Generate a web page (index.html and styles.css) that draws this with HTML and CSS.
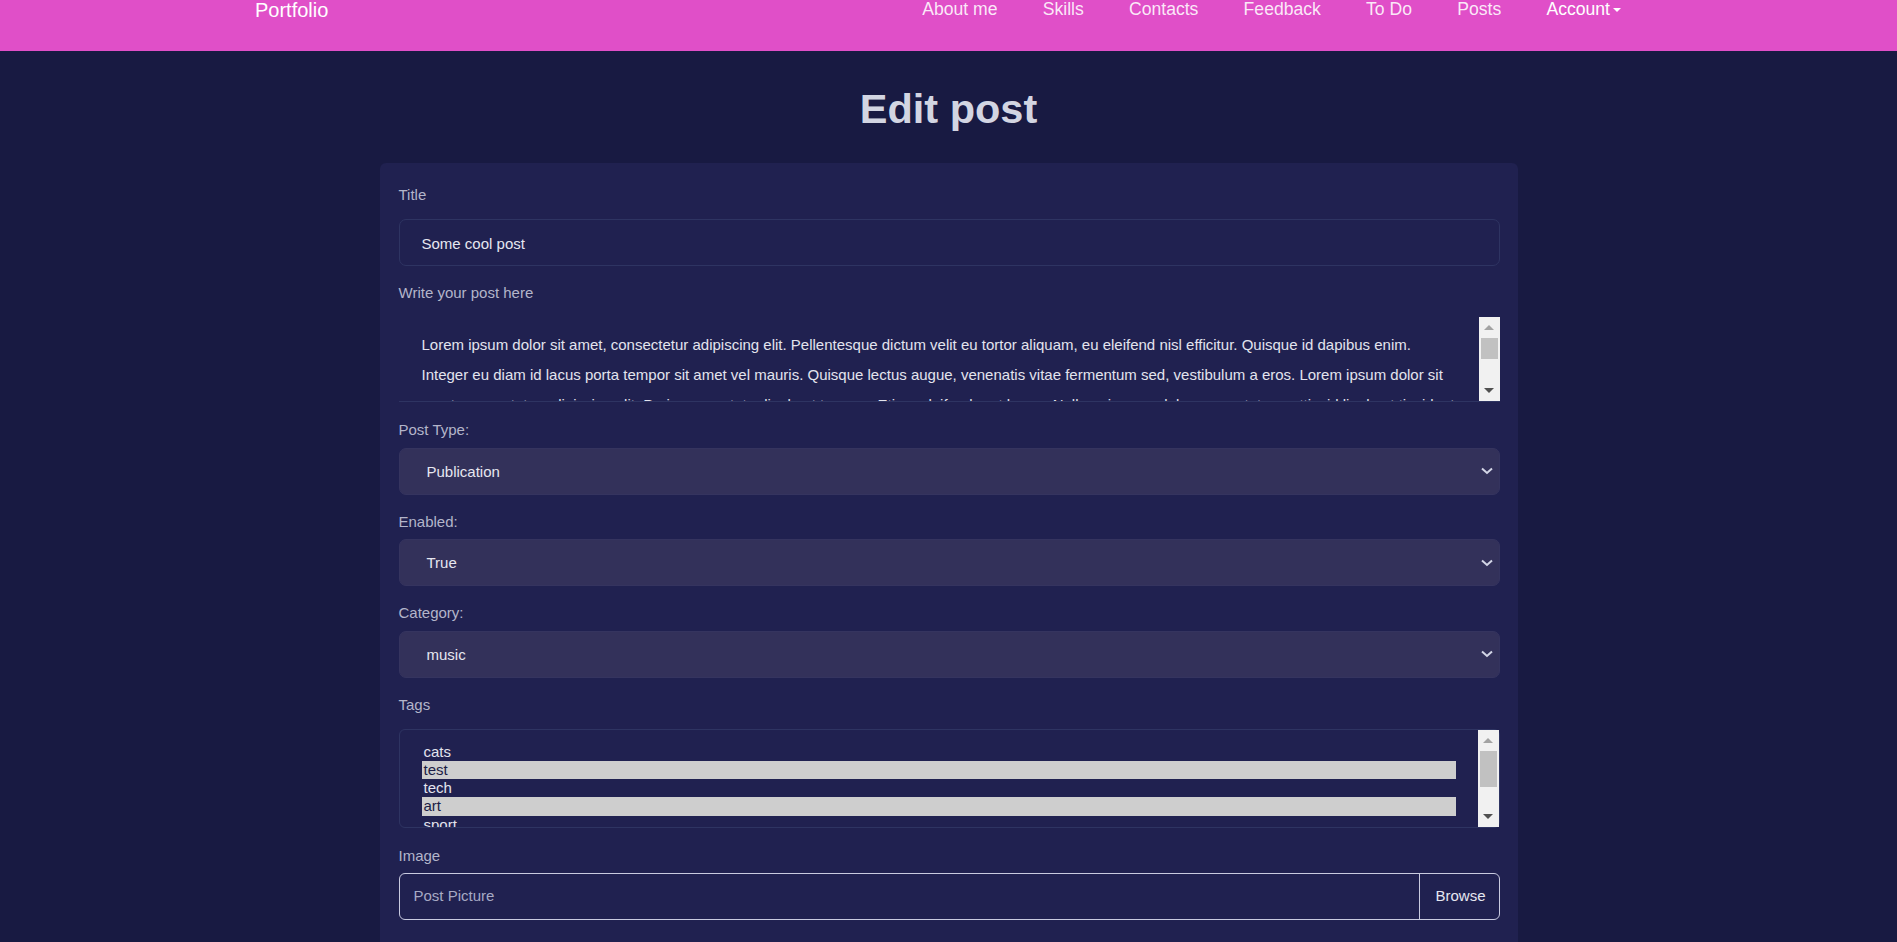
FILE: index.html
```html
<!DOCTYPE html>
<html lang="en">
<head>
<meta charset="utf-8">
<title>Edit post</title>
<link rel="stylesheet" href="styles.css">
</head>
<body>
<nav class="navbar">
  <div class="nav-inner">
    <a class="brand" href="#">Portfolio</a>
    <ul class="nav-links">
      <li><a href="#">About me</a></li>
      <li><a href="#">Skills</a></li>
      <li><a href="#">Contacts</a></li>
      <li><a href="#">Feedback</a></li>
      <li><a href="#">To Do</a></li>
      <li><a href="#">Posts</a></li>
      <li><a class="account" href="#">Account<span class="caret"></span></a></li>
    </ul>
  </div>
</nav>

<main class="page">
  <h1 class="page-title">Edit post</h1>
  <form class="card">
    <div class="field">
      <label class="form-label">Title</label>
      <div class="text-input">Some cool post</div>
    </div>

    <div class="field tall">
      <label class="form-label">Write your post here</label>
      <div class="textarea">
        <div class="textarea-body">
          <p class="line">Lorem ipsum dolor sit amet, consectetur adipiscing elit. Pellentesque dictum velit eu tortor aliquam, eu eleifend nisl efficitur. Quisque id dapibus enim.</p>
          <p class="line">Integer eu diam id lacus porta tempor sit amet vel mauris. Quisque lectus augue, venenatis vitae fermentum sed, vestibulum a eros. Lorem ipsum dolor sit</p>
          <p class="line">amet, consectetur adipiscing elit. Proin consectetur ligula et tempus. Etiam eleifend erat lorem. Nulla quis nunc dolor consectetur mattis, id ligula et tincidunt.</p>
        </div>
        <div class="scrollbar">
          <div class="sb-btn"><span class="arrow-up"></span></div>
          <div class="sb-thumb sb-thumb-short"></div>
          <div class="sb-space"></div>
          <div class="sb-btn"><span class="arrow-down"></span></div>
        </div>
      </div>
    </div>

    <div class="field">
      <label class="select-label">Post Type:</label>
      <div class="select">
        <span>Publication</span>
        <svg class="chevron" width="12" height="8" viewBox="0 0 12 8"><polyline points="1,1.5 6,6 11,1.5" fill="none" stroke="#d3d5e6" stroke-width="2"/></svg>
      </div>
    </div>

    <div class="field">
      <label class="select-label">Enabled:</label>
      <div class="select">
        <span>True</span>
        <svg class="chevron" width="12" height="8" viewBox="0 0 12 8"><polyline points="1,1.5 6,6 11,1.5" fill="none" stroke="#d3d5e6" stroke-width="2"/></svg>
      </div>
    </div>

    <div class="field">
      <label class="select-label">Category:</label>
      <div class="select">
        <span>music</span>
        <svg class="chevron" width="12" height="8" viewBox="0 0 12 8"><polyline points="1,1.5 6,6 11,1.5" fill="none" stroke="#d3d5e6" stroke-width="2"/></svg>
      </div>
    </div>

    <div class="field tall">
      <label class="form-label">Tags</label>
      <div class="multiselect">
        <div class="options">
          <div class="option">cats</div>
          <div class="option selected">test</div>
          <div class="option">tech</div>
          <div class="option selected">art</div>
          <div class="option">sport</div>
          <div class="option">music</div>
        </div>
        <div class="scrollbar">
          <div class="sb-btn"><span class="arrow-up"></span></div>
          <div class="sb-thumb sb-thumb-long"></div>
          <div class="sb-space"></div>
          <div class="sb-btn"><span class="arrow-down"></span></div>
        </div>
      </div>
    </div>

    <div class="field">
      <label class="select-label">Image</label>
      <div class="file-input">
        <span class="file-placeholder">Post Picture</span>
        <span class="file-browse">Browse</span>
      </div>
    </div>
  </form>
</main>
</body>
</html>
```

FILE: styles.css
```css
* {
  box-sizing: border-box;
}

html, body {
  margin: 0;
  padding: 0;
}

body {
  background: #181a42;
  font-family: "Liberation Sans", Arial, sans-serif;
  color: #e3e4ee;
  overflow: hidden;
  height: 942px;
}

a {
  text-decoration: none;
}

/* Navbar */
.navbar {
  background: #e04fc8;
  height: 51px;
}

.nav-inner {
  width: 1387px;
  margin: 0 auto;
  display: flex;
  justify-content: space-between;
  align-items: flex-start;
}

.brand {
  color: #ffffff;
  font-size: 20px;
  line-height: 20px;
}

.nav-links {
  list-style: none;
  margin: 0;
  padding: 0;
  display: flex;
}

.nav-links a {
  display: block;
  color: rgba(255, 255, 255, 0.88);
  font-size: 17.6px;
  line-height: 18px;
  padding: 0 22.6px;
}

.nav-links li:last-child a {
  padding-right: 21px;
}

.nav-links a.account {
  color: #ffffff;
}

.caret {
  display: inline-block;
  width: 0;
  height: 0;
  margin-left: 3px;
  border-left: 4.5px solid transparent;
  border-right: 4.5px solid transparent;
  border-top: 4.5px solid #ffffff;
  vertical-align: middle;
}

/* Page */
.page {
  padding-top: 33px;
}

.page-title {
  margin: 0 0 29px;
  text-align: center;
  font-size: 41.5px;
  line-height: 50px;
  font-weight: bold;
  color: #d2d5e2;
}

.card {
  width: 1138px;
  margin: 0 auto;
  background: #202150;
  border-radius: 6px;
  padding: 21px 18px 40px 19px;
}

.field {
  margin-bottom: 16px;
}

.field.tall {
  margin-bottom: 17px;
}

.form-label,
.select-label {
  display: block;
  font-size: 15px;
  line-height: 22px;
  color: #b3b5ca;
}

.form-label {
  margin-bottom: 13px;
}

.select-label {
  margin-bottom: 6.5px;
}

/* Title input */
.text-input {
  height: 47px;
  border: 1px solid #2e3462;
  border-radius: 7px;
  padding: 1px 22px 0;
  display: flex;
  align-items: center;
  font-size: 15px;
  color: #e6e7f0;
}

/* Textarea */
.textarea {
  height: 85px;
  display: flex;
  border-bottom: 1px solid #2e3462;
}

.textarea-body {
  flex: 1;
  overflow: hidden;
  padding: 13px 23px 0 23px;
}

.line {
  margin: 0;
  font-size: 15px;
  line-height: 30px;
  white-space: nowrap;
  color: #e3e4ee;
}

/* Fake scrollbars */
.scrollbar {
  width: 21px;
  flex: none;
  background: #f1f1f1;
  display: flex;
  flex-direction: column;
}

.sb-btn {
  height: 21px;
  flex: none;
  display: flex;
  align-items: center;
  justify-content: center;
}

.arrow-up {
  width: 0;
  height: 0;
  border-left: 5px solid transparent;
  border-right: 5px solid transparent;
  border-bottom: 5px solid #a3a3a3;
}

.arrow-down {
  width: 0;
  height: 0;
  border-left: 5px solid transparent;
  border-right: 5px solid transparent;
  border-top: 5px solid #505050;
}

.sb-thumb {
  margin: 0 2px;
  background: #c1c1c1;
  flex: none;
}

.sb-thumb-short {
  height: 21px;
}

.sb-thumb-long {
  height: 36px;
}

.sb-space {
  flex: 1;
}

/* Selects */
.select {
  height: 47px;
  background: #33315a;
  border: 1px solid #35345f;
  border-radius: 7px;
  padding: 0 6px 0 27px;
  display: flex;
  align-items: center;
  justify-content: space-between;
  font-size: 15px;
  color: #e6e7f0;
}

.chevron {
  display: block;
}

/* Multi select */
.multiselect {
  height: 99px;
  border: 1px solid #2e3462;
  border-radius: 6px;
  display: flex;
}

.options {
  flex: 1;
  overflow: hidden;
  padding: 13px 22px 0 22px;
}

.option {
  height: 18.3px;
  line-height: 18px;
  font-size: 15px;
  padding-left: 2px;
  color: #e3e4ee;
}

.option.selected {
  background: #cecece;
  color: #1c1d45;
}

/* File input */
.file-input {
  height: 47px;
  border: 1px solid #c9cbe0;
  border-radius: 6px;
  display: flex;
  align-items: stretch;
  font-size: 15px;
}

.file-placeholder {
  flex: 1;
  display: flex;
  align-items: center;
  padding-left: 14px;
  padding-bottom: 2px;
  color: #a7aac4;
}

.file-browse {
  display: flex;
  align-items: center;
  padding: 0 13px 2px 15px;
  border-left: 1px solid #c9cbe0;
  color: #e6e7f0;
}
```
